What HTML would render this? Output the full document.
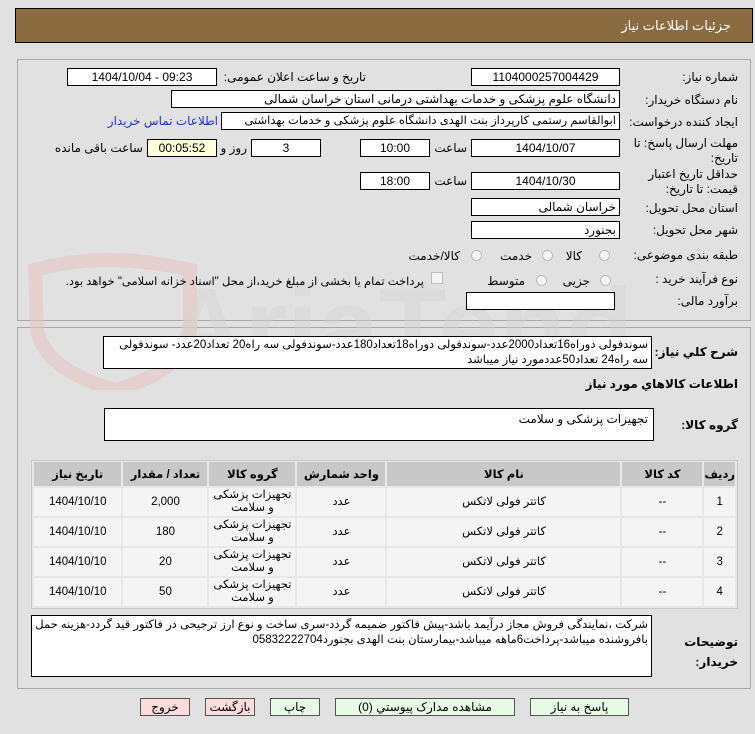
<!DOCTYPE html>
<html><head><meta charset="utf-8"><style>
body{margin:0;width:755px;height:734px;background:#e1e1e1;font-family:Tahoma,"Liberation Sans","DejaVu Sans",sans-serif;font-size:12px;color:#000;position:relative;overflow:hidden}
.a{position:absolute}
.f{position:absolute;background:#fff;border:1px solid #000;box-sizing:border-box;height:18px;line-height:16px;text-align:center;white-space:nowrap;overflow:hidden;font-size:12px}
.r{text-align:right;padding-right:3px;direction:rtl}
.l{position:absolute;white-space:nowrap;direction:rtl;font-size:12px}
.rad{position:absolute;width:11px;height:11px;border-radius:50%;border:1px solid #bbb;background:#f4f4f4;box-sizing:border-box}
table{border-collapse:separate;border-spacing:2px}
td,th{text-align:center;font-size:11.5px;padding:0}
th{background:#c8c8c8;height:24px;font-weight:bold}
td{background:#f4f4f4;height:28px;line-height:13px}
.btn{position:absolute;top:698px;height:18px;border:1px solid #555;box-sizing:border-box;text-align:center;line-height:16px;background:#e6fae6}
</style></head><body>
<div class="a" style="left:15px;top:8px;width:738px;height:35px;background:#8b6b40;border:1px solid #000;box-sizing:border-box"></div>
<div class="l" style="right:24px;top:18px;color:#fff;font-size:13px">جزئیات اطلاعات نیاز</div>

<div class="a" style="left:17px;top:59px;width:734px;height:262px;border:1px solid #a8a8a8;box-sizing:border-box"></div>
<div class="a" style="left:17px;top:327px;width:734px;height:362px;border:1px solid #a8a8a8;box-sizing:border-box"></div>

<svg class="a" style="left:15px;top:240px" width="620" height="150"><path d="M20 30 Q90 10 175 30 L175 90 Q170 130 100 150 Q30 130 22 90Z" fill="none" stroke="#e8c4c4" stroke-width="14" opacity=".6"/><text x="150" y="125" font-size="110" font-family="Liberation Sans" font-weight="bold" fill="#d4d4d4" opacity=".45">AriaTender</text></svg>

<div class="l" style="right:17px;top:70px">شماره نیاز:</div>
<div class="f" style="left:471px;top:68px;width:149px">1104000257004429</div>
<div class="l" style="right:389px;top:70px">تاریخ و ساعت اعلان عمومی:</div>
<div class="f" style="left:67px;top:68px;width:150px">1404/10/04 - 09:23</div>

<div class="l" style="right:17px;top:93px">نام دستگاه خریدار:</div>
<div class="f r" style="left:171px;top:90px;width:449px">دانشگاه علوم پزشکی و خدمات بهداشتی درمانی استان خراسان شمالی</div>

<div class="l" style="right:17px;top:115px">ایجاد کننده درخواست:</div>
<div class="f r" style="left:221px;top:112px;width:399px;font-size:11.5px">ابوالقاسم رستمی کارپرداز بنت الهدی دانشگاه علوم پزشکی و خدمات بهداشتی</div>
<div class="l" style="right:537px;top:114px;color:#1a33cc">اطلاعات تماس خریدار</div>

<div class="l" style="right:17px;top:136px;line-height:15px;text-align:right">مهلت ارسال پاسخ: تا<br>تاریخ:</div>
<div class="f" style="left:471px;top:139px;width:149px">1404/10/07</div>
<div class="l" style="right:288px;top:141px">ساعت</div>
<div class="f" style="left:360px;top:139px;width:70px">10:00</div>
<div class="f" style="left:251px;top:139px;width:70px">3</div>
<div class="l" style="right:508px;top:141px">روز و</div>
<div class="f" style="left:147px;top:139px;width:70px;background:#ffffd8">00:05:52</div>
<div class="l" style="right:612px;top:141px">ساعت باقی مانده</div>

<div class="l" style="right:17px;top:167px;line-height:15px;text-align:right">حداقل تاریخ اعتبار<br>قیمت: تا تاریخ:</div>
<div class="f" style="left:471px;top:172px;width:149px">1404/10/30</div>
<div class="l" style="right:288px;top:174px">ساعت</div>
<div class="f" style="left:360px;top:172px;width:70px">18:00</div>

<div class="l" style="right:17px;top:201px">استان محل تحویل:</div>
<div class="f r" style="left:471px;top:198px;width:149px">خراسان شمالی</div>
<div class="l" style="right:17px;top:223px">شهر محل تحویل:</div>
<div class="f r" style="left:471px;top:221px;width:149px">بجنورد</div>

<div class="l" style="right:17px;top:248px">طبقه بندی موضوعی:</div>
<div class="rad" style="left:599px;top:250px"></div><div class="l" style="right:173px;top:249px">کالا</div>
<div class="rad" style="left:542px;top:250px"></div><div class="l" style="right:223px;top:249px">خدمت</div>
<div class="rad" style="left:471px;top:250px"></div><div class="l" style="right:295px;top:249px">کالا/خدمت</div>

<div class="l" style="right:17px;top:272px">نوع فرآیند خرید :</div>
<div class="rad" style="left:600px;top:275px"></div><div class="l" style="right:165px;top:274px">جزیی</div>
<div class="rad" style="left:536px;top:275px"></div><div class="l" style="right:230px;top:274px">متوسط</div>
<div class="a" style="left:431px;top:272px;width:12px;height:12px;border:1px solid #bbb;background:#f4f4f4;box-sizing:border-box"></div>
<div class="l" style="right:331px;top:274px;font-size:11.5px">پرداخت تمام یا بخشی از مبلغ خرید،از محل "اسناد خزانه اسلامی" خواهد بود.</div>

<div class="l" style="right:17px;top:294px">برآورد مالی:</div>
<div class="f" style="left:466px;top:292px;width:149px"></div>

<div class="l" style="right:17px;top:345px;font-weight:bold">شرح كلي نياز:</div>
<div class="a" style="left:103px;top:336px;width:549px;height:33px;background:#fff;border:1px solid #000;box-sizing:border-box;direction:rtl;padding:1px 3px;line-height:15px;font-size:11.5px;overflow:hidden">سوندفولی دوراه16تعداد2000عدد-سوندفولی دوراه18تعداد180عدد-سوندفولی سه راه20 تعداد20عدد- سوندفولی سه راه24 تعداد50عددمورد نیاز میباشد</div>
<div class="l" style="right:17px;top:377px;font-weight:bold">اطلاعات كالاهاي مورد نياز</div>
<div class="l" style="right:17px;top:418px;font-weight:bold">گروه کالا:</div>
<div class="a" style="left:104px;top:408px;width:550px;height:33px;background:#fff;border:1px solid #000;box-sizing:border-box;direction:rtl;padding:3px 5px">تجهیزات پزشکی و سلامت</div>

<div class="a" style="left:31px;top:460px;width:707px;height:149px;border:1px solid #c8c8c8;box-sizing:border-box;background:#e8e8e8">
<table style="width:705px;direction:rtl;margin-top:-1px">
<tr><th style="width:26px">ردیف</th><th style="width:80px">کد کالا</th><th style="width:233px">نام کالا</th><th style="width:88px">واحد شمارش</th><th style="width:86px">گروه کالا</th><th style="width:84px">تعداد / مقدار</th><th>تاریخ نیاز</th></tr>
<tr><td>1</td><td>--</td><td>کاتتر فولی لاتکس</td><td>عدد</td><td>تجهیزات پزشکی و سلامت</td><td>2,000</td><td>1404/10/10</td></tr>
<tr><td>2</td><td>--</td><td>کاتتر فولی لاتکس</td><td>عدد</td><td>تجهیزات پزشکی و سلامت</td><td>180</td><td>1404/10/10</td></tr>
<tr><td>3</td><td>--</td><td>کاتتر فولی لاتکس</td><td>عدد</td><td>تجهیزات پزشکی و سلامت</td><td>20</td><td>1404/10/10</td></tr>
<tr><td>4</td><td>--</td><td>کاتتر فولی لاتکس</td><td>عدد</td><td>تجهیزات پزشکی و سلامت</td><td>50</td><td>1404/10/10</td></tr>
</table></div>

<div class="l" style="right:17px;top:632px;font-weight:bold;line-height:20px;text-align:right">توضیحات<br>خریدار:</div>
<div class="a" style="left:31px;top:615px;width:621px;height:62px;background:#fff;border:1px solid #000;box-sizing:border-box;direction:rtl;padding:2px 3px;line-height:15px;font-size:11.5px">شرکت ،نمایندگی فروش مجاز درآیمد باشد-پیش فاکتور ضمیمه گردد-سری ساخت و نوع ارز ترجیحی در فاکتور قید گردد-هزینه حمل بافروشنده میباشد-پرداخت6ماهه میباشد-بیمارستان بنت الهدی بجنورد05832222704</div>

<div class="btn" style="left:530px;width:99px">پاسخ به نیاز</div>
<div class="btn" style="left:335px;width:180px">مشاهده مدارک پیوستي (0)</div>
<div class="btn" style="left:270px;width:50px">چاپ</div>
<div class="btn" style="left:205px;width:50px;background:#fadcdc">بازگشت</div>
<div class="btn" style="left:140px;width:50px;background:#fadcdc">خروج</div>
</body></html>
